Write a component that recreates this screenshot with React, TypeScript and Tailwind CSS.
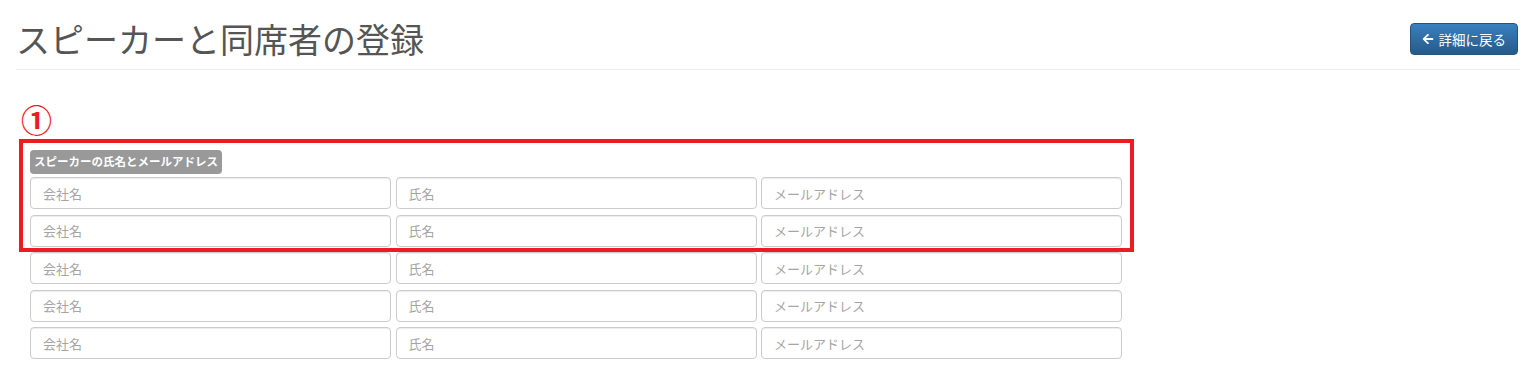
import React from "react"
import { FaArrowLeft } from "react-icons/fa"

const rows = [0, 1, 2, 3, 4, 5]

export default function App() {
  return (
    <div className="min-h-[365px] bg-white px-4 font-['Noto_Sans_CJK_JP','Noto_Sans',sans-serif]">
      <div className="flex items-start justify-between border-b border-[#eee] pt-[20px] pb-[12px]">
        <h1 className="text-[34px] leading-[1.1] font-normal text-[#555]">
          スピーカーと同席者の登録
        </h1>
        <button className="mt-[3px] mr-[2px] flex h-[32px] items-center gap-[5px] rounded-[4px] border border-[#245580] bg-gradient-to-b from-[#3a80c0] to-[#265a88] px-[11px] text-[13.5px] text-white">
          <FaArrowLeft className="h-[12px] w-[12px]" />
          <span>詳細に戻る</span>
        </button>
      </div>

      <div className="mt-[33px] ml-[5px] text-[31px] leading-none font-bold text-[#ee1c25]">①</div>

      <div className="relative mt-[5px] pl-[14px]">
        <div className="pt-[8px]">
          <span className="inline-flex h-[24px] items-center rounded-[4px] bg-[#999] px-[4px] text-[11.5px] font-bold text-white">
            スピーカーの氏名とメールアドレス
          </span>
        </div>
        <div className="mt-[3px] grid w-[1092px] grid-cols-3 gap-x-[4.5px] gap-y-[5.5px]">
          {rows.map((r) => (
            <React.Fragment key={r}>
              <input
                placeholder="会社名"
                className="h-[32px] rounded-[4px] border border-[#ccc] px-[12px] text-[13px] text-[#555] shadow-[inset_0_1px_1px_rgba(0,0,0,0.075)] outline-none placeholder:text-[#a5a5a5]"
              />
              <input
                placeholder="氏名"
                className="h-[32px] rounded-[4px] border border-[#ccc] px-[12px] text-[13px] text-[#555] shadow-[inset_0_1px_1px_rgba(0,0,0,0.075)] outline-none placeholder:text-[#a5a5a5]"
              />
              <input
                placeholder="メールアドレス"
                className="h-[32px] rounded-[4px] border border-[#ccc] px-[12px] text-[13px] text-[#555] shadow-[inset_0_1px_1px_rgba(0,0,0,0.075)] outline-none placeholder:text-[#a5a5a5]"
              />
            </React.Fragment>
          ))}
        </div>
        {/* annotation frame drawn over the first two rows */}
        <div className="pointer-events-none absolute top-0 left-[3px] h-[113px] w-[1115px] border-[4px] border-[#ed1c24]" />
      </div>
    </div>
  )
}
